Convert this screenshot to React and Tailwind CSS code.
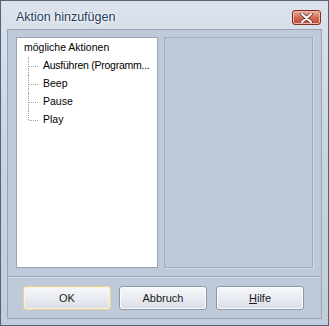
import React from "react";

function TreeRow({ label, last, tight }) {
  return (
    <div className="relative h-[18px] flex items-center pl-[19px]">
      <div
        className={`absolute left-[4px] top-0 border-l border-dotted border-[#a0a0a0] ${last ? "h-[9px]" : "h-[18px]"}`}
      />
      <div className="absolute left-[5px] top-[9px] w-[9px] border-t border-dotted border-[#a0a0a0]" />
      <span className={`whitespace-nowrap ${tight ? "tracking-[-0.25px]" : ""}`}>{label}</span>
    </div>
  );
}

function Btn({ children, focused }) {
  return (
    <div
      className={`w-[88px] h-[24px] rounded-[3px] border flex items-center justify-center text-[11px] text-[#1b1b1b] bg-gradient-to-b from-[#f7f8fa] via-[#e9ecf1] to-[#d8dde6] ${
        focused ? "border-[#e3d49b] shadow-[inset_0_0_0_1px_#fbf3d5]" : "border-[#8e98a8] shadow-[inset_0_0_0_1px_#fbfcfd]"
      }`}
    >
      {children}
    </div>
  );
}

export default function App() {
  return (
    <div
      className="w-[329px] h-[326px] border border-[#566277] bg-gradient-to-b from-[#dbe2ec] via-[#c9d3e1] to-[#c2ccdb] flex flex-col"
      style={{ fontFamily: '"Liberation Sans", Arial, sans-serif' }}
    >
      <div className="h-[28px] flex items-center justify-between pl-[15px] pr-[7px]">
        <span
          className="text-[12.5px] text-[#1e3a5c] mt-[5px]"
          style={{ textShadow: "0 0 4px #ffffff, 0 0 2px #ffffff" }}
        >
          Aktion hinzufügen
        </span>
        <div className="w-[29px] h-[15px] mt-[5px] rounded-[3px] border border-[#7d2d22] bg-gradient-to-b from-[#e9b3a6] via-[#d36b55] to-[#c44a33] flex items-center justify-center shadow-[inset_0_0_0_1px_#f0b8a8]">
          <svg width="13" height="10" viewBox="0 0 13 10">
            <path
              d="M2 1 L11 9 M11 1 L2 9"
              stroke="#6b3a33"
              strokeWidth="3.6"
              strokeLinecap="round"
              fill="none"
            />
            <path
              d="M2 1 L11 9 M11 1 L2 9"
              stroke="#ffffff"
              strokeWidth="2"
              strokeLinecap="round"
              fill="none"
            />
          </svg>
        </div>
      </div>
      <div className="flex-1 px-[6px] pb-[6px] flex">
        <div className="flex-1 border border-[#98a3b4] bg-[#bec9da] flex flex-col">
          <div className="flex gap-[6px] pt-[7px] px-[8px]">
            <div className="w-[142px] h-[231px] bg-white border border-[#9ba4b1] pt-[1px] pl-[7px] text-[10.5px] text-black overflow-hidden">
              <div className="h-[18px] flex items-center">mögliche Aktionen</div>
              <TreeRow label="Ausführen (Programm..." tight />
              <TreeRow label="Beep" />
              <TreeRow label="Pause" />
              <TreeRow label="Play" last />
            </div>
            <div className="w-[149px] h-[231px] border border-[#a3adbd] shadow-[1px_1px_0_#d3dae5] bg-[#bec9da]" />
          </div>
          <div className="mt-[8px] border-t border-[#9ca7b8] border-b border-b-[#d2d9e4]" />
          <div className="flex gap-[8px] px-[15px] pt-[8px]">
            <Btn focused>OK</Btn>
            <Btn>Abbruch</Btn>
            <div className="ml-[1px]">
              <Btn>
                <span>
                  <span className="underline">H</span>ilfe
                </span>
              </Btn>
            </div>
          </div>
        </div>
      </div>
    </div>
  );
}
